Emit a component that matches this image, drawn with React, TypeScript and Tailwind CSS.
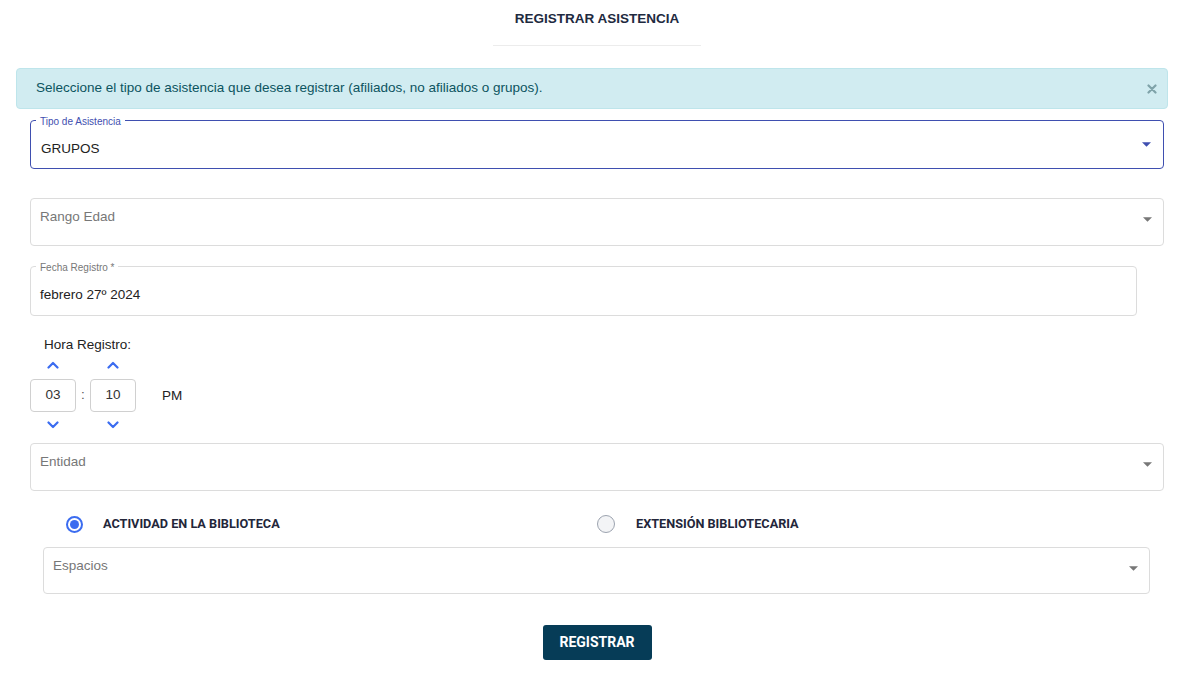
import React from "react";

const Caret = ({ color }: { color: string }) => (
  <svg width="9" height="5" viewBox="0 0 10 5" className="shrink-0">
    <path d="M0 0 L10 0 L5 5 Z" fill={color} />
  </svg>
);

const ChevUp = () => (
  <svg width="12" height="8" viewBox="0 0 12 8">
    <path d="M1.5 6.5 L6 2 L10.5 6.5" fill="none" stroke="#3b6cf0" strokeWidth="2.2" strokeLinecap="round" strokeLinejoin="round" />
  </svg>
);
const ChevDown = () => (
  <svg width="12" height="8" viewBox="0 0 12 8">
    <path d="M1.5 1.5 L6 6 L10.5 1.5" fill="none" stroke="#3b6cf0" strokeWidth="2.2" strokeLinecap="round" strokeLinejoin="round" />
  </svg>
);

const Placeholder = ({ text, h }: { text: string; h: string }) => (
  <div className={`flex ${h} items-start justify-between rounded-[4px] border border-[#dcdcdc] bg-white pl-[9px] pr-[11px]`}>
    <span className="pt-[10px] text-[13.5px] leading-[16px] text-[#777]">{text}</span>
    <div className="pt-[18px]">
      <Caret color="#777" />
    </div>
  </div>
);

export default function App() {
  return (
    <div className="min-h-[683px] bg-white font-['Liberation_Sans',Arial,sans-serif] text-[#212529]">
      <div className="ml-[30px] mr-[20px] flex flex-col items-center pt-[11px]">
        <h1 className="text-[13.5px] font-bold leading-[16px] text-[#1e2a40]">REGISTRAR ASISTENCIA</h1>
        <div className="mt-[18px] h-px w-[208px] bg-[#ececec]" />
      </div>

      <div className="mx-[16px] mt-[22px] flex h-[41px] items-center justify-between rounded-[4px] border border-[#bee5eb] bg-[#d1ecf1] pl-[19px] pr-[10px]">
        <span className="text-[13.5px] text-[#0c5460]">
          Seleccione el tipo de asistencia que desea registrar (afiliados, no afiliados o grupos).
        </span>
        <svg width="10" height="10" viewBox="0 0 10 10" className="shrink-0">
          <path d="M1.5 1.5 L8.5 8.5 M8.5 1.5 L1.5 8.5" stroke="#7fa3a9" strokeWidth="2.2" strokeLinecap="round" />
        </svg>
      </div>

      <div className="ml-[30px] mr-[20px]">
        <div className="relative mt-[11px] flex h-[49px] items-center justify-between rounded-[4px] border border-[#3f4fb0] pl-[10px] pr-[12px]">
          <span className="absolute left-[5px] top-[-5px] bg-white px-[4px] text-[10px] leading-[12px] text-[#3f4fb0]">
            Tipo de Asistencia
          </span>
          <span className="pt-[9px] text-[13.5px] text-[#222]">GRUPOS</span>
          <Caret color="#3f4fb0" />
        </div>

        <div className="mt-[29px]">
          <Placeholder text="Rango Edad" h="h-[48px]" />
        </div>

        <div className="relative mr-[27px] mt-[20px] flex h-[50px] items-center rounded-[4px] border border-[#dcdcdc] pl-[9px]">
          <span className="absolute left-[5px] top-[-5px] bg-white px-[4px] text-[10px] leading-[12px] text-[#777]">
            Fecha Registro *
          </span>
          <span className="pt-[9px] text-[13.5px] text-[#222]">febrero 27º 2024</span>
        </div>

        <div className="mt-[21px] pl-[14px] text-[13.5px] leading-[16px] text-[#222]">Hora Registro:</div>

        <div className="mt-[2px] flex items-start">
          <div className="flex flex-col items-center">
            <div className="flex h-[20px] items-center"><ChevUp /></div>
            <div className="mt-[4px] flex h-[33px] w-[46px] items-center justify-center rounded-[4px] border border-[#d0d0d0] text-[13.5px] text-[#333]">03</div>
            <div className="mt-[3px] flex h-[20px] items-center"><ChevDown /></div>
          </div>
          <div className="flex h-[80px] w-[14px] items-center justify-center text-[13.5px] text-[#555]">:</div>
          <div className="flex flex-col items-center">
            <div className="flex h-[20px] items-center"><ChevUp /></div>
            <div className="mt-[4px] flex h-[33px] w-[46px] items-center justify-center rounded-[4px] border border-[#d0d0d0] text-[13.5px] text-[#333]">10</div>
            <div className="mt-[3px] flex h-[20px] items-center"><ChevDown /></div>
          </div>
          <div className="ml-[26px] flex h-[80px] items-center pt-[2px] text-[13.5px] text-[#222]">PM</div>
        </div>

        <div className="mt-[8px]">
          <Placeholder text="Entidad" h="h-[48px]" />
        </div>

        <div className="mt-[24px] flex h-[18px] items-center font-['Roboto',sans-serif] text-[12.7px] font-bold text-[#23263a]">
          <div className="ml-[36px] flex w-[531px] items-center">
            <span className="flex h-[17px] w-[17px] items-center justify-center rounded-full border-[2px] border-[#3b6cf0] bg-white">
              <span className="h-[9px] w-[9px] rounded-full bg-[#3b6cf0]" />
            </span>
            <span className="ml-[20px]">ACTIVIDAD EN LA BIBLIOTECA</span>
          </div>
          <div className="flex items-center">
            <span className="h-[18px] w-[18px] rounded-full border border-[#9ca3af] bg-[#f3f4f6]" />
            <span className="ml-[21px]">EXTENSIÓN BIBLIOTECARIA</span>
          </div>
        </div>

        <div className="ml-[13px] mr-[14px] mt-[14px]">
          <Placeholder text="Espacios" h="h-[47px]" />
        </div>

        <div className="mt-[31px] flex justify-center">
          <button className="h-[35px] w-[109px] rounded-[3px] bg-[#063c57] font-['Roboto',sans-serif] text-[14px] font-bold text-white">
            REGISTRAR
          </button>
        </div>
      </div>
    </div>
  );
}
